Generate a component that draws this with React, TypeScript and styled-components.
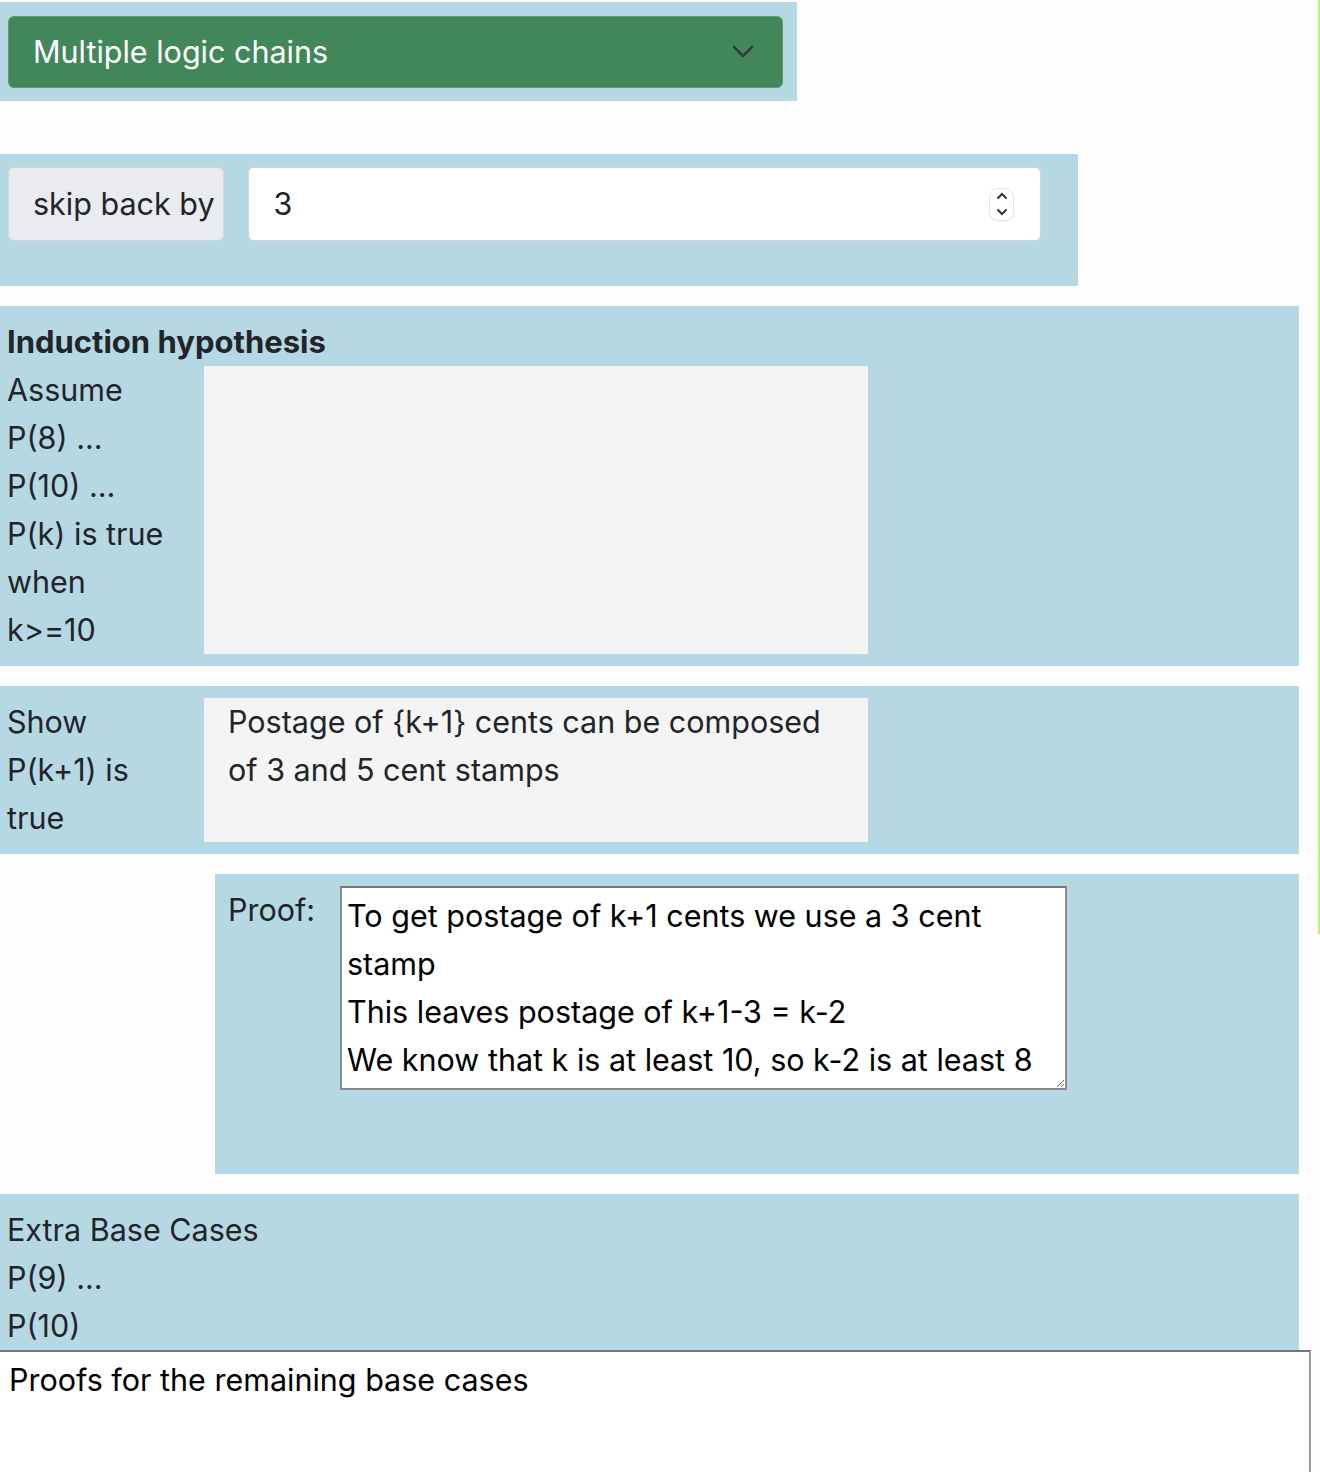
import React from "react";
import styled, { createGlobalStyle } from "styled-components";

const FONT = `Inter, "Liberation Sans", Arial, sans-serif`;

const Global = createGlobalStyle`
  html, body { margin: 0; padding: 0; background: #fdfdfd; }
  body {
    font-family: ${FONT};
    color: #212529;
    font-size: 30.5px;
    line-height: 48px;
    width: 1320px;
    overflow: hidden;
  }
  * { box-sizing: border-box; }
`;

const Page = styled.div`
  position: relative;
  width: 1320px;
  padding-top: 2px;
  display: flex;
  flex-direction: column;
  align-items: flex-start;
`;

const EdgeLine = styled.div`
  position: absolute;
  top: 0;
  right: 0;
  width: 2px;
  height: 934px;
  background: #bdf27a;
`;

const Block = styled.section<{ $w: number; $ml?: number; $mt?: number; $pad: string; $h?: number }>`
  background: #b6d8e3;
  width: ${(p) => p.$w}px;
  margin-left: ${(p) => p.$ml ?? 0}px;
  margin-top: ${(p) => p.$mt ?? 0}px;
  padding: ${(p) => p.$pad};
  ${(p) => (p.$h ? `height: ${p.$h}px;` : "")}
`;

const SelectBox = styled.div`
  height: 72px;
  background: #41875a;
  border: 1px solid #5e9a74;
  border-radius: 6px;
  color: #fff;
  display: flex;
  align-items: center;
  justify-content: space-between;
  padding: 0 28px 0 24px;
`;

const InputGroup = styled.div`
  display: flex;
  align-items: stretch;
  gap: 24px;
  height: 74px;
  width: 1033px;
`;

const GroupLabel = styled.div`
  background: #e9ebef;
  border: 1px solid #d3d6da;
  border-radius: 6px;
  padding: 0 8px 0 24px;
  display: flex;
  align-items: center;
`;

const NumberField = styled.div`
  flex: 1;
  background: #fff;
  border: 1px solid #d3d6da;
  border-radius: 6px;
  display: flex;
  align-items: center;
  justify-content: space-between;
  padding: 0 26px 0 25px;
  color: #212529;
`;

const Spinner = styled.div`
  width: 25px;
  height: 33px;
  border: 1px solid #e3e3e3;
  border-radius: 9px;
  display: flex;
  flex-direction: column;
  align-items: center;
  justify-content: space-around;
  background: #fff;
  box-shadow: 0 1px 1px rgba(0,0,0,0.05);
`;

const Heading = styled.div`
  font-weight: 700;
  font-size: 31px;
  padding-left: 7px;
`;

const Row = styled.div<{ $labelW: number }>`
  display: grid;
  grid-template-columns: ${(p) => p.$labelW}px 664px;
  align-items: start;
`;

const Labels = styled.div`
  padding-left: 7px;
  display: flex;
  flex-direction: column;
`;

const GreyBox = styled.div<{ $h: number }>`
  background: #f4f4f4;
  height: ${(p) => p.$h}px;
  padding: 0 24px;
`;

const ProofRow = styled.div`
  display: flex;
  align-items: flex-start;
  padding-left: 13px;
  gap: 12px;
`;

const ProofLabel = styled.div`
  width: 100px;
`;

const ProofArea = styled.textarea`
  width: 727px;
  height: 204px;
  border: 2px solid #8a8a8a;
  border-top-color: #767676;
  background: #fff;
  font-family: ${FONT};
  font-size: 30.5px;
  line-height: 48px;
  color: #000;
  padding: 4px 5px;
  margin: 0;
  resize: both;
  overflow: hidden;
`;

const BottomArea = styled.textarea`
  width: 1311px;
  height: 140px;
  border: 2px solid #9a9a9a;
  border-left: none;
  border-top-color: #767676;
  background: #fff;
  font-family: ${FONT};
  font-size: 30.5px;
  line-height: 48px;
  color: #000;
  padding: 4px 7px 4px 9px;
  margin: 0;
  resize: none;
  overflow: hidden;
`;

const Chevron = () => (
  <svg width="22" height="14" viewBox="0 0 22 14">
    <path d="M2 2 L11 11 L20 2" fill="none" stroke="#343a40" strokeWidth="2.6" strokeLinecap="round" strokeLinejoin="round" />
  </svg>
);

export default function App() {
  return (
    <Page>
      <Global />
      <EdgeLine />
      <Block $w={797} $pad="14px 14px 13px 8px">
        <SelectBox>
          <span>Multiple logic chains</span>
          <Chevron />
        </SelectBox>
      </Block>

      <Block $w={1078} $mt={53} $pad="13px 0 0 8px" $h={132}>
        <InputGroup>
          <GroupLabel>skip back by</GroupLabel>
          <NumberField>
            <span>3</span>
            <Spinner>
              <svg width="12" height="8" viewBox="0 0 12 8">
                <path d="M2 6 L6 2 L10 6" fill="none" stroke="#333" strokeWidth="2" strokeLinecap="round" />
              </svg>
              <svg width="12" height="8" viewBox="0 0 12 8">
                <path d="M2 2 L6 6 L10 2" fill="none" stroke="#333" strokeWidth="2" strokeLinecap="round" />
              </svg>
            </Spinner>
          </NumberField>
        </InputGroup>
      </Block>

      <Block $w={1299} $mt={20} $pad="12px 0">
        <Heading>Induction hypothesis</Heading>
        <Row $labelW={204}>
          <Labels>
            <span>Assume</span>
            <span>P(8) ...</span>
            <span>P(10) ...</span>
            <span>P(k) is true</span>
            <span>when</span>
            <span>k&gt;=10</span>
          </Labels>
          <GreyBox $h={288} />
        </Row>
      </Block>

      <Block $w={1299} $mt={20} $pad="12px 0">
        <Row $labelW={204}>
          <Labels>
            <span>Show</span>
            <span>P(k+1) is</span>
            <span>true</span>
          </Labels>
          <GreyBox $h={144}>
            Postage of {"{k+1}"} cents can be composed of 3 and 5 cent stamps
          </GreyBox>
        </Row>
      </Block>

      <Block $w={1084} $ml={215} $mt={20} $pad="12px 0 0 0" $h={300}>
        <ProofRow>
          <ProofLabel>Proof:</ProofLabel>
          <ProofArea
            readOnly
            value={
              "To get postage of k+1 cents we use a 3 cent stamp\nThis leaves postage of k+1-3 = k-2\nWe know that k is at least 10, so k-2 is at least 8"
            }
          />
        </ProofRow>
      </Block>

      <Block $w={1299} $mt={20} $pad="12px 0 0 0">
        <Labels>
          <span>Extra Base Cases</span>
          <span>P(9) ...</span>
          <span>P(10)</span>
        </Labels>
      </Block>

      <BottomArea readOnly value="Proofs for the remaining base cases" />
    </Page>
  );
}
